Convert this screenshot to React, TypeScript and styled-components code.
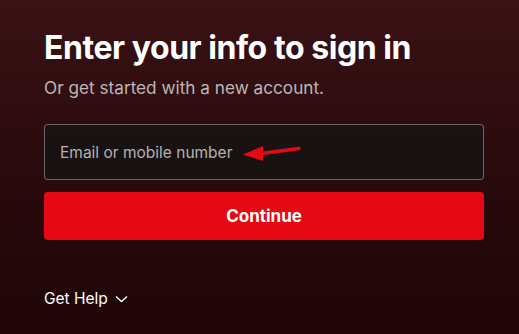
import React from "react";
import styled, { createGlobalStyle } from "styled-components";

const Global = createGlobalStyle`
  html, body { margin: 0; padding: 0; }
  body {
    width: 519px;
    height: 334px;
    overflow: hidden;
    font-family: Inter, "Noto Sans", "Liberation Sans", sans-serif;
    background: #230708;
  }
`;

const Page = styled.main`
  box-sizing: border-box;
  width: 519px;
  height: 334px;
  padding: 28px 35px 0 44px;
  background: linear-gradient(180deg, #391215 0%, #2c0b0d 45%, #1f0507 100%);
  display: flex;
  flex-direction: column;
`;

const Title = styled.h1`
  margin: 0;
  font-size: 32px;
  line-height: 40px;
  font-weight: 700;
  color: #ffffff;
  letter-spacing: -0.45px;
`;

const Subtitle = styled.p`
  margin: 8px 0 0;
  font-size: 17.2px;
  line-height: 24px;
  color: #bcb6b6;
`;

const Field = styled.div`
  position: relative;
  box-sizing: border-box;
  margin-top: 24px;
  height: 56px;
  border: 1px solid rgba(140, 130, 130, 0.75);
  border-radius: 4px;
  background: rgba(22, 20, 20, 0.85);
  display: flex;
  align-items: center;
  padding: 0 15px;
`;

const Placeholder = styled.span`
  font-size: 15.5px;
  color: #b6b0b0;
`;

const Arrow = styled.svg`
  position: absolute;
  left: 196px;
  top: 18px;
`;

const ContinueButton = styled.button`
  margin-top: 12px;
  height: 48px;
  border: none;
  border-radius: 4px;
  background: #e50914;
  color: #ffffff;
  font-family: inherit;
  font-size: 17px;
  font-weight: 700;
  cursor: pointer;
`;

const HelpLink = styled.div`
  margin-top: 47px;
  display: flex;
  align-items: center;
  gap: 7px;
  color: #ffffff;
  font-size: 15.5px;
  line-height: 24px;
`;

export default function App() {
  return (
    <>
      <Global />
      <Page>
        <Title>Enter your info to sign in</Title>
        <Subtitle>Or get started with a new account.</Subtitle>
        <Field>
          <Placeholder>Email or mobile number</Placeholder>
          <Arrow width="60" height="20" viewBox="0 0 60 20">
            <path d="M20 10.5 L58 5.5" stroke="#e50914" strokeWidth="3.5" strokeLinecap="round" fill="none" />
            <path d="M2 11.5 L22 3 L22 18 Z" fill="#e50914" />
          </Arrow>
        </Field>
        <ContinueButton>Continue</ContinueButton>
        <HelpLink>
          Get Help
          <svg width="13" height="8" viewBox="0 0 13 8">
            <path d="M1 1.5 L6.5 6.5 L12 1.5" stroke="#ffffff" strokeWidth="1.4" fill="none" />
          </svg>
        </HelpLink>
      </Page>
    </>
  );
}
